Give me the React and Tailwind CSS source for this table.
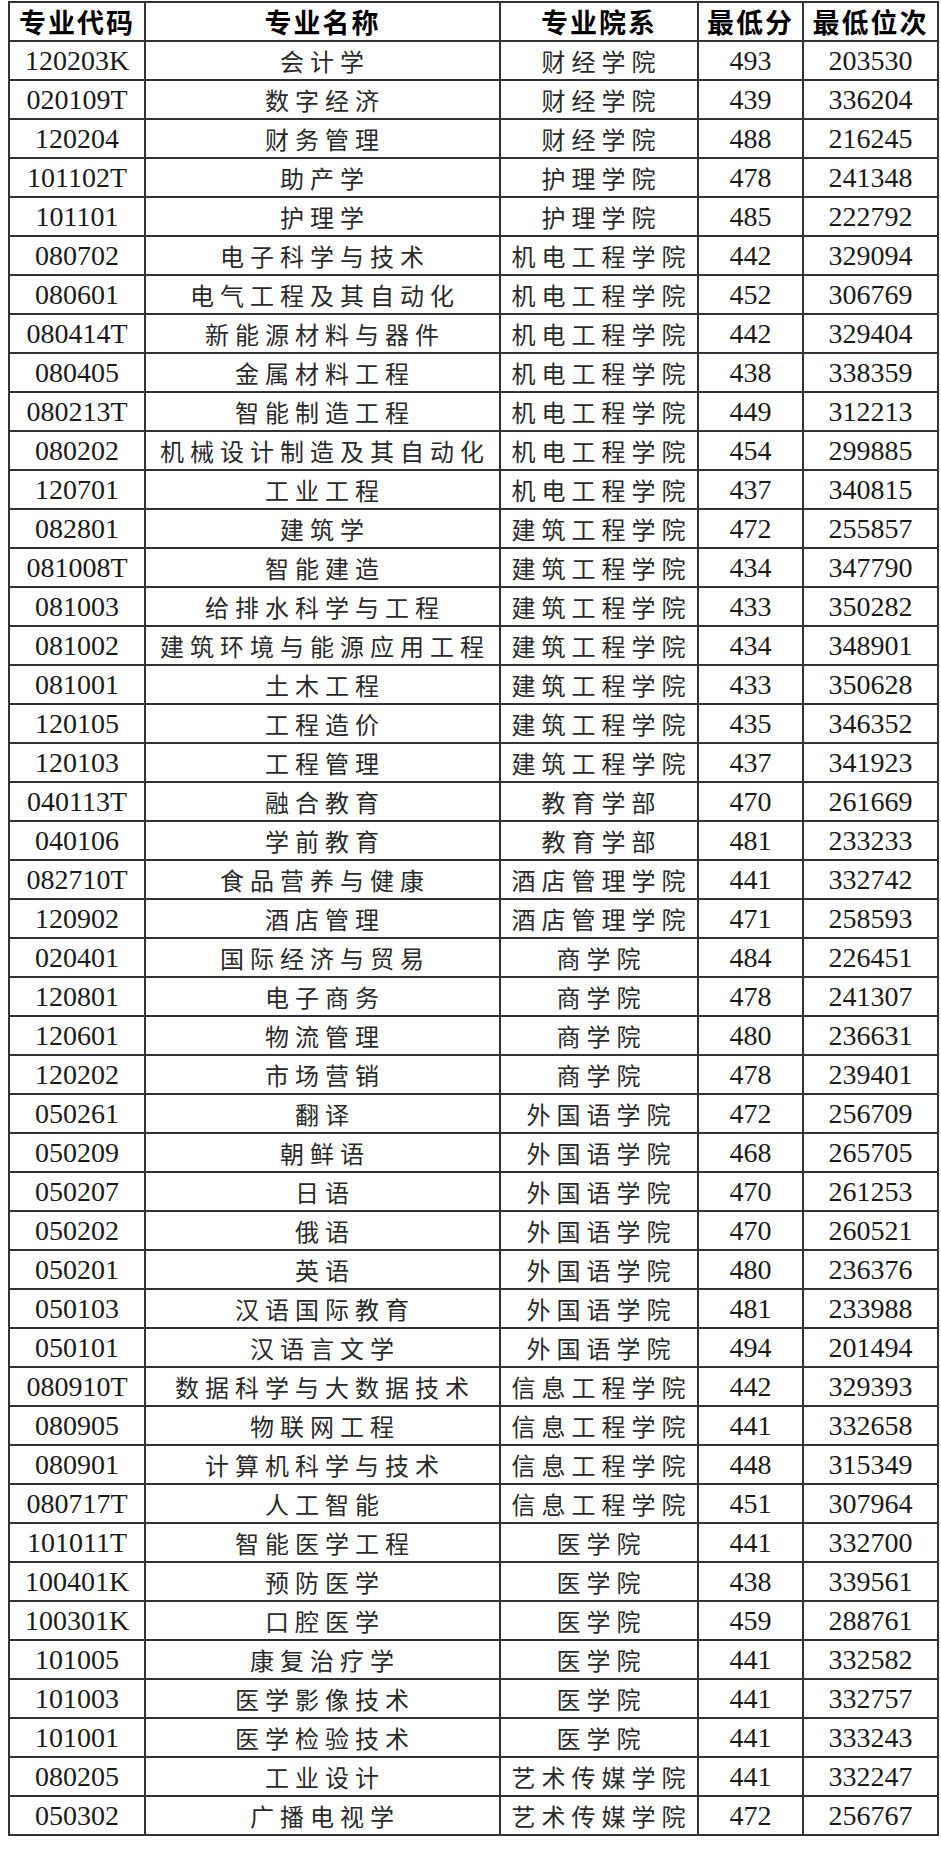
const rows = [
  ['120203K', '会计学', '财经学院', '493', '203530'],
  ['020109T', '数字经济', '财经学院', '439', '336204'],
  ['120204', '财务管理', '财经学院', '488', '216245'],
  ['101102T', '助产学', '护理学院', '478', '241348'],
  ['101101', '护理学', '护理学院', '485', '222792'],
  ['080702', '电子科学与技术', '机电工程学院', '442', '329094'],
  ['080601', '电气工程及其自动化', '机电工程学院', '452', '306769'],
  ['080414T', '新能源材料与器件', '机电工程学院', '442', '329404'],
  ['080405', '金属材料工程', '机电工程学院', '438', '338359'],
  ['080213T', '智能制造工程', '机电工程学院', '449', '312213'],
  ['080202', '机械设计制造及其自动化', '机电工程学院', '454', '299885'],
  ['120701', '工业工程', '机电工程学院', '437', '340815'],
  ['082801', '建筑学', '建筑工程学院', '472', '255857'],
  ['081008T', '智能建造', '建筑工程学院', '434', '347790'],
  ['081003', '给排水科学与工程', '建筑工程学院', '433', '350282'],
  ['081002', '建筑环境与能源应用工程', '建筑工程学院', '434', '348901'],
  ['081001', '土木工程', '建筑工程学院', '433', '350628'],
  ['120105', '工程造价', '建筑工程学院', '435', '346352'],
  ['120103', '工程管理', '建筑工程学院', '437', '341923'],
  ['040113T', '融合教育', '教育学部', '470', '261669'],
  ['040106', '学前教育', '教育学部', '481', '233233'],
  ['082710T', '食品营养与健康', '酒店管理学院', '441', '332742'],
  ['120902', '酒店管理', '酒店管理学院', '471', '258593'],
  ['020401', '国际经济与贸易', '商学院', '484', '226451'],
  ['120801', '电子商务', '商学院', '478', '241307'],
  ['120601', '物流管理', '商学院', '480', '236631'],
  ['120202', '市场营销', '商学院', '478', '239401'],
  ['050261', '翻译', '外国语学院', '472', '256709'],
  ['050209', '朝鲜语', '外国语学院', '468', '265705'],
  ['050207', '日语', '外国语学院', '470', '261253'],
  ['050202', '俄语', '外国语学院', '470', '260521'],
  ['050201', '英语', '外国语学院', '480', '236376'],
  ['050103', '汉语国际教育', '外国语学院', '481', '233988'],
  ['050101', '汉语言文学', '外国语学院', '494', '201494'],
  ['080910T', '数据科学与大数据技术', '信息工程学院', '442', '329393'],
  ['080905', '物联网工程', '信息工程学院', '441', '332658'],
  ['080901', '计算机科学与技术', '信息工程学院', '448', '315349'],
  ['080717T', '人工智能', '信息工程学院', '451', '307964'],
  ['101011T', '智能医学工程', '医学院', '441', '332700'],
  ['100401K', '预防医学', '医学院', '438', '339561'],
  ['100301K', '口腔医学', '医学院', '459', '288761'],
  ['101005', '康复治疗学', '医学院', '441', '332582'],
  ['101003', '医学影像技术', '医学院', '441', '332757'],
  ['101001', '医学检验技术', '医学院', '441', '333243'],
  ['080205', '工业设计', '艺术传媒学院', '441', '332247'],
  ['050302', '广播电视学', '艺术传媒学院', '472', '256767'],
];

const headers = ['专业代码', '专业名称', '专业院系', '最低分', '最低位次'];

const serif = "font-['Liberation_Serif','Noto_Sans_CJK_SC',serif]";
const cjk = "font-['Noto_Sans_CJK_SC',sans-serif]";

export default function App() {
  return (
    <div className="bg-white w-[941px] h-[1861px] pt-px pl-[8px]">
      <table className="border-collapse table-fixed w-[929px] text-[#1a1a1a]">
        <colgroup>
          <col className="w-[136px]" />
          <col className="w-[355px]" />
          <col className="w-[198px]" />
          <col className="w-[105px]" />
          <col className="w-[135px]" />
        </colgroup>
        <thead>
          <tr>
            {headers.map(h => (
              <th
                key={h}
                className={`${cjk} border-2 border-[#333] h-[39px] p-0 text-[27px] leading-none font-bold tracking-[2px] text-center text-black`}
              >
                {h}
              </th>
            ))}
          </tr>
        </thead>
        <tbody>
          {rows.map(r => (
            <tr key={r[0]}>
              <td className={`${serif} border-2 border-[#333] h-[39px] p-0 text-[28px] leading-none text-center`}>{r[0]}</td>
              <td className={`${cjk} border-2 border-[#333] h-[39px] p-0 pl-[5px] text-[24px] leading-none tracking-[6px] text-center whitespace-nowrap text-[#2a2a2a]`}>{r[1]}</td>
              <td className={`${cjk} border-2 border-[#333] h-[39px] p-0 pl-[5px] text-[24px] leading-none tracking-[6px] text-center whitespace-nowrap text-[#2a2a2a]`}>{r[2]}</td>
              <td className={`${serif} border-2 border-[#333] h-[39px] p-0 text-[28px] leading-none text-center`}>{r[3]}</td>
              <td className={`${serif} border-2 border-[#333] h-[39px] p-0 text-[28px] leading-none text-center`}>{r[4]}</td>
            </tr>
          ))}
        </tbody>
      </table>
    </div>
  );
}
